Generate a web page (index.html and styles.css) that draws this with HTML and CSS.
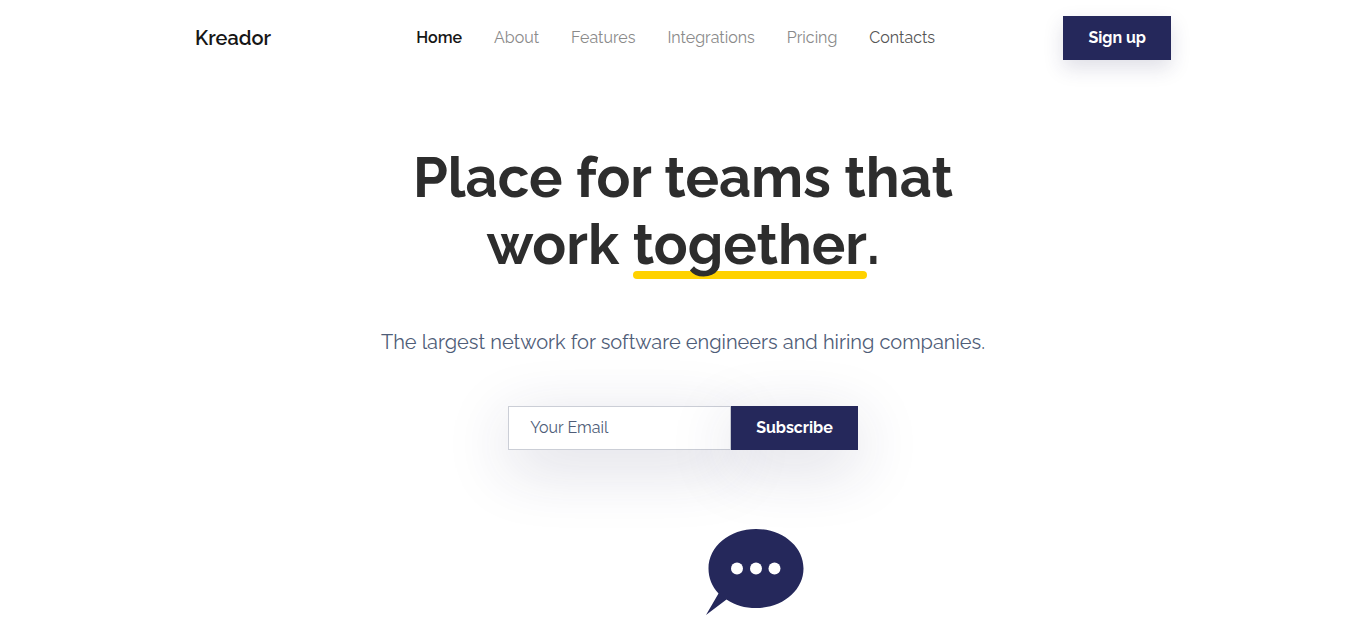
FILE: index.html
```html
<!DOCTYPE html>
<html lang="en">
<head>
<meta charset="utf-8">
<meta name="viewport" content="width=device-width, initial-scale=1">
<title>Kreador</title>
<link rel="stylesheet" href="styles.css">
</head>
<body>
<header class="header">
  <a class="brand" href="#">Kreador</a>
  <nav class="nav" aria-label="Main">
    <a class="nav-link active" href="#">Home</a>
    <a class="nav-link" href="#">About</a>
    <a class="nav-link" href="#">Features</a>
    <a class="nav-link" href="#">Integrations</a>
    <a class="nav-link" href="#">Pricing</a>
    <a class="nav-link strong" href="#">Contacts</a>
  </nav>
  <button class="button signup" type="button">Sign up</button>
</header>
<main class="hero">
  <h1 class="title">Place for teams that<br>work <span class="highlight">together</span>.</h1>
  <p class="lead">The largest network for software engineers and hiring companies.</p>
  <form class="subscribe">
    <input class="email" type="email" placeholder="Your Email" aria-label="Your Email">
    <button class="button submit" type="submit">Subscribe</button>
  </form>
  <svg class="bubble" width="98" height="86" viewBox="0 0 98 86" aria-hidden="true">
    <path fill="#25285b" d="M50 0C76.500 0 97.500 17.500 97.500 39.500S76.500 79 50 79C39 79 29 76.500 20.500 70.500L0 86L12.500 64.500C6 57.500 2.500 49 2.500 39.500C2.500 17.500 23.500 0 50 0Z"/>
    <g fill="#fff"><circle cx="31" cy="39.500" r="6"/><circle cx="50" cy="39.500" r="6"/><circle cx="68.500" cy="39.500" r="6"/></g>
  </svg>
</main>
</body>
</html>
```
FILE: styles.css
```css
* { box-sizing: border-box; }
body {
  margin: 0;
  background: #fff;
  color: #2d2d2d;
  font-family: Raleway, Lato, sans-serif;
  font-size: 16px;
  line-height: 24px;
}
.header {
  display: flex;
  justify-content: space-between;
  align-items: center;
  max-width: 1024px;
  margin: 0 auto;
  padding: 16px 24px;
}
.brand {
  color: #161616;
  font-size: 20px;
  font-weight: 600;
  text-decoration: none;
}
.nav {
  display: flex;
  gap: 32px;
  margin-left: 17px;
}
.nav-link {
  color: #8a8a8a;
  font-weight: 400;
  text-decoration: none;
}
.nav-link.active {
  color: #161616;
  font-weight: 600;
}
.nav-link.strong { color: #555; }
.button {
  height: 44px;
  padding: 0 25px;
  border: 0;
  background: #25285b;
  color: #fff;
  font: inherit;
  font-weight: 700;
  cursor: pointer;
}
.signup { box-shadow: 0 8px 20px rgba(37, 40, 91, 0.15); }
.hero {
  display: flex;
  flex-direction: column;
  align-items: center;
  padding: 68px 24px 0;
  text-align: center;
}
.title {
  margin: 0;
  font-size: 56px;
  font-weight: 700;
  line-height: 67px;
}
.highlight {
  position: relative;
  z-index: 0;
}
.highlight::after {
  content: "";
  position: absolute;
  z-index: -1;
  left: 0;
  right: 0;
  bottom: -2px;
  height: 8px;
  border-radius: 4px;
  background: #ffd200;
}
.lead {
  margin: 48px 0;
  color: #4f5d78;
  font-size: 20px;
  font-weight: 400;
  line-height: 32px;
}
.subscribe {
  display: flex;
}
.email {
  width: 223px;
  height: 44px;
  padding: 0 21px 2px;
  border: 1px solid #cbced6;
  border-radius: 0;
  background: #fff;
  color: #4f5d78;
  font: inherit;
  box-shadow: 0 16px 64px rgba(37, 40, 91, 0.18);
}
.email::placeholder {
  color: #4f5d78;
  opacity: 1;
}
.submit { box-shadow: 0 16px 64px rgba(37, 40, 91, 0.18); }
.bubble {
  margin: 79px 0 0 144px;
}
```
